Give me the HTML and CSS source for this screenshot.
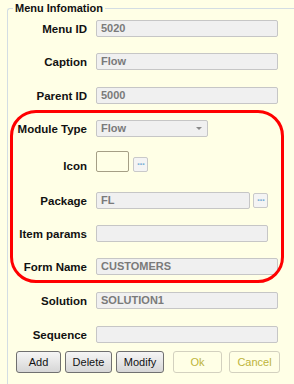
FILE: index.html
```html
<!DOCTYPE html>
<html lang="en">
<head>
    <meta charset="UTF-8">
    <meta name="viewport" content="width=device-width, initial-scale=1.0">
    <title>Menu Infomation</title>
    <link rel="stylesheet" href="styles.css">
</head>
<body>
    <fieldset class="group">
        <legend>Menu Infomation</legend>

        <div class="row">
            <label>Menu ID</label>
            <div class="field">5020</div>
        </div>
        <div class="row">
            <label>Caption</label>
            <div class="field">Flow</div>
        </div>
        <div class="row gap-wide">
            <label>Parent ID</label>
            <div class="field">5000</div>
        </div>
        <div class="row">
            <label>Module Type</label>
            <div class="field select">Flow<span class="arrow"></span></div>
        </div>
        <div class="row row-icon">
            <label>Icon</label>
            <div class="icon-box"></div>
            <button class="dots">&middot;&middot;&middot;</button>
        </div>
        <div class="row row-package">
            <label>Package</label>
            <div class="field package">FL</div>
            <button class="dots">&middot;&middot;&middot;</button>
        </div>
        <div class="row">
            <label>Item params</label>
            <div class="field params"></div>
        </div>
        <div class="row">
            <label>Form Name</label>
            <div class="field">CUSTOMERS</div>
        </div>
        <div class="row gap-wide">
            <label>Solution</label>
            <div class="field">SOLUTION1</div>
        </div>
        <div class="row gap-wide">
            <label>Sequence</label>
            <div class="field"></div>
        </div>

        <div class="actions">
            <button class="btn btn-add">Add</button>
            <button class="btn btn-delete">Delete</button>
            <button class="btn btn-modify">Modify</button>
            <button class="btn btn-off btn-ok">Ok</button>
            <button class="btn btn-off btn-cancel">Cancel</button>
        </div>
    </fieldset>

    <!-- red marker drawn over the form -->
    <div class="highlight"></div>
</body>
</html>
```

FILE: styles.css
```css
body {
    margin: 0;
    height: 384px;
    overflow: hidden;
    display: flex;
    flex-direction: column;
    background-color: #ffffe6;
    font-family: "Liberation Sans", Arial, sans-serif;
    font-size: 11px;
    color: #111;
}
.group {
    flex: 1;
    min-width: 0;
    margin: 2px 0 0 7px;
    padding: 0;
    border: 1px solid #d3dde3;
    border-right: none;
    border-bottom: none;
    border-radius: 3px 0 0 0;
}
.group legend {
    margin-left: 5px;
    padding: 0 2px;
    font-weight: bold;
    line-height: 13px;
}
.row {
    display: flex;
    align-items: center;
    height: 17px;
}
.row:first-of-type {
    margin-top: 5px;
}
.row + .row {
    margin-top: 16px;
}
.row.gap-wide {
    margin-top: 17px;
}
.row label {
    width: 79px;
    margin-right: 9px;
    text-align: right;
    font-size: 11.5px;
    font-weight: bold;
}
.field {
    box-sizing: border-box;
    width: 182px;
    height: 17px;
    padding: 0 4px;
    background-color: #f0f0f0;
    border: 1px solid #c6c6c6;
    border-radius: 2px;
    color: #7a7a7a;
    font-weight: bold;
    line-height: 15px;
    white-space: nowrap;
}
.select {
    position: relative;
    width: 112px;
}
.arrow {
    position: absolute;
    right: 5px;
    top: 6px;
    border-left: 3px solid transparent;
    border-right: 3px solid transparent;
    border-top: 3px solid #8a8a8a;
}
.row.row-icon {
    margin-top: 14px;
    height: 21px;
    align-items: flex-end;
}
.icon-box {
    box-sizing: border-box;
    width: 33px;
    height: 21px;
    border: 1px solid #a59f86;
    border-radius: 2px;
}
.row-icon .dots {
    margin-left: 4px;
}
.row.row-package {
    margin-top: 20px;
}
.package {
    width: 154px;
}
.row-package .dots {
    margin-left: 3px;
}
.params {
    width: 172px;
}
.dots {
    box-sizing: border-box;
    width: 15px;
    height: 15px;
    padding: 0;
    background-color: #f4f4f4;
    border: 1px solid #c9c9c9;
    border-radius: 2px;
    color: #7fb2d6;
    font-family: "DejaVu Sans", sans-serif;
    font-size: 9px;
    font-weight: bold;
    line-height: 11px;
    letter-spacing: -1px;
}
.actions {
    display: flex;
    margin: 8px 0 0 8px;
}
.btn {
    box-sizing: border-box;
    height: 22px;
    padding: 0;
    border: 1px solid #707070;
    border-radius: 3px;
    background: linear-gradient(#f5f5f5, #e6e6e6 50%, #d6d6d6);
    font-family: "Liberation Sans", Arial, sans-serif;
    font-size: 11px;
    color: #111;
}
.btn-add { width: 45px; }
.btn-delete { width: 47px; margin-left: 4px; }
.btn-modify { width: 48px; margin-left: 4px; }
.btn-off {
    background: transparent;
    border-color: #d3d1bf;
    color: #bdb43a;
}
.btn-ok { width: 49px; margin-left: 9px; }
.btn-cancel { width: 51px; margin-left: 7px; }
.highlight {
    position: absolute;
    left: 10px;
    top: 110px;
    width: 268px;
    height: 167px;
    border: 3px solid #ff0000;
    border-radius: 26px;
    pointer-events: none;
}
```
